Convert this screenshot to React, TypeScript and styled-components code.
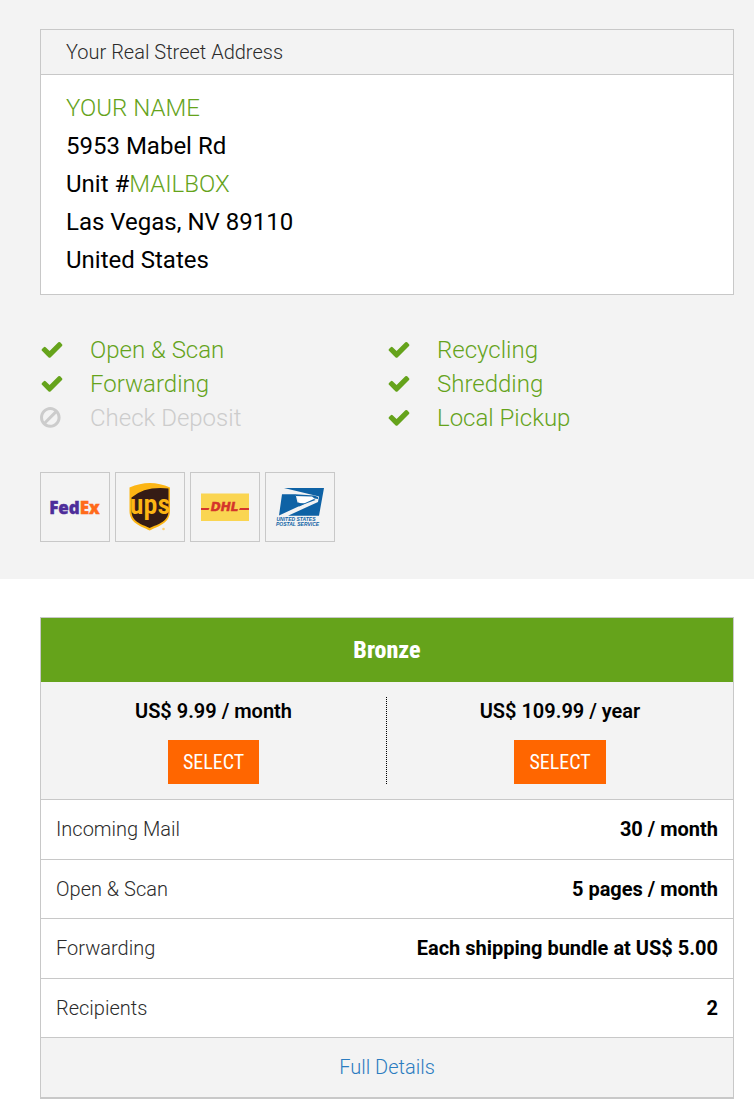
import React from 'react';
import styled, { createGlobalStyle } from 'styled-components';

const GlobalStyle = createGlobalStyle`
  *, *::before, *::after { box-sizing: border-box; }
  body { margin: 0; background: #fff; color: #000; font: 300 20px/28px Roboto, "Liberation Sans", sans-serif; }
`;

const green = '#65a31b';
const line = '#c8c8c8';
const grey = '#f3f3f3';
const muted = '#2b2b2b';

const Location = styled.section`
  padding: 29px 20px 37px 40px;
  background: ${grey};
`;

const AddressCard = styled.div`
  border: 1px solid ${line};
`;

const AddressTitle = styled.h2`
  margin: 0;
  padding: 8px 25px;
  border-bottom: 1px solid ${line};
  color: ${muted};
  font-size: 20px;
  font-weight: 300;
`;

const Address = styled.address`
  padding: 14px 25px 15px;
  background: #fff;
  font-size: 24px;
  font-style: normal;
  font-weight: 400;
  line-height: 38px;
`;

const Placeholder = styled.span`
  color: ${green};
  font-weight: 300;
`;

const Features = styled.ul`
  display: grid;
  grid-auto-flow: column;
  grid-template-rows: repeat(3, auto);
  grid-template-columns: 1fr 1fr;
  margin: 38px 0 37px;
  padding: 0;
  list-style: none;
  font-size: 24px;
  line-height: 34px;
`;

const Feature = styled.li<{ $off?: boolean }>`
  display: flex;
  align-items: center;
  gap: 26px;
  color: ${(p) => (p.$off ? '#cccccc' : green)};
`;

const FeatureIcon = styled.svg`
  width: 24px;
  height: 24px;
  fill: currentColor;
`;

const Carriers = styled.div`
  display: flex;
  gap: 5px;
`;

const Carrier = styled.div`
  width: 70px;
  height: 70px;
  border: 1px solid ${line};
  svg { display: block; width: 100%; height: 100%; }
`;

const Plans = styled.section`
  padding: 38px 20px 7px 40px;
`;

const Plan = styled.article`
  border: 1px solid ${line};
  border-bottom-width: 2px;
`;

const PlanName = styled.h2`
  margin: 0;
  padding: 18px 15px;
  background: ${green};
  color: #fff;
  font: 800 24px/28px "Roboto Condensed", Roboto, sans-serif;
  text-align: center;
`;

const Prices = styled.div`
  display: grid;
  grid-template-columns: 1fr 1fr;
  padding: 15px 0;
  background: ${grey};
  border-bottom: 1px solid ${line};
`;

const Price = styled.div`
  display: flex;
  flex-direction: column;
  align-items: center;
  gap: 15px;
  font-weight: 600;
  &:first-child { border-right: 1px dotted #000; }
`;

const SelectButton = styled.button`
  padding: 8px 15px;
  border: 0;
  background: #ff6600;
  color: #fff;
  font: 400 20px/28px "Roboto Condensed", Roboto, sans-serif;
  cursor: pointer;
`;

const Limits = styled.table`
  width: 100%;
  height: 238px;
  border-spacing: 0;
`;

const LimitName = styled.th`
  padding: 0 15px;
  border-bottom: 1px solid ${line};
  color: ${muted};
  font-weight: 300;
  text-align: left;
`;

const LimitValue = styled.td`
  padding: 0 15px;
  border-bottom: 1px solid ${line};
  font-weight: 700;
  text-align: right;
`;

const PlanFooter = styled.div`
  padding: 15px 16px 16px;
  background: ${grey};
  text-align: center;
`;

const DetailsLink = styled.a`
  color: #2b7cc0;
  text-decoration: none;
`;

const CheckIcon = () => (
  <FeatureIcon viewBox="0 40 1792 1792" aria-hidden="true">
    <path d="M1671 566q0 40-28 68l-724 724-136 136q-28 28-68 28t-68-28l-136-136-362-362q-28-28-28-68t28-68l136-136q28-28 68-28t68 28l294 295 656-657q28-28 68-28t68 28l136 136q28 28 28 68z" />
  </FeatureIcon>
);

const BanIcon = () => (
  <FeatureIcon viewBox="128 40 1792 1792" aria-hidden="true">
    <path d="M1440 893q0-161-87-295l-754 753q137 89 297 89 111 0 211.5-43.5t173.5-116.5 116-174.5 43-212.5zm-999 299l755-754q-135-91-300-91-148 0-273 73t-198 199-73 274q0 162 89 299zm1223-299q0 157-61 300t-163.5 246-245 164-298.5 61-298.5-61-245-164-163.5-246-61-300 61-299.5 163.5-245.5 245-164 298.5-61 298.5 61 245 164 163.5 245.5 61 299.5z" />
  </FeatureIcon>
);

const FedexLogo = () => (
  <svg viewBox="0 0 68 68" role="img" aria-label="FedEx">
    <text x="33.500" y="41" textAnchor="middle" fontFamily="Open Sans, sans-serif" fontWeight="800" fontSize="17" fill="#4d2d9a" stroke="#4d2d9a" strokeWidth="0.4">
      Fed<tspan fill="#ff6a1a" stroke="#ff6a1a">Ex</tspan>
    </text>
  </svg>
);

const UpsLogo = () => (
  <svg viewBox="0 0 68 68" role="img" aria-label="UPS">
    <path d="M13.5 14.5Q34 5.500 54 14.500V38C54 50 43 53 33.700 57.500C24.500 53 13.500 50 13.500 38Z" fill="#fcb514" />
    <path d="M15.500 24.500Q29 13 52.500 15.500V38C52.500 48.500 42.500 51 33.700 55C25 51 15.500 48.500 15.500 38Z" fill="#351c15" />
    <text x="34" y="41" textAnchor="middle" fontFamily="Roboto Condensed, Roboto, sans-serif" fontWeight="600" fontSize="28" fill="#fcb514">ups</text>
    <circle cx="47.500" cy="56" r="1.300" fill="#fbd27a" />
  </svg>
);

const DhlLogo = () => (
  <svg viewBox="0 0 68 68" role="img" aria-label="DHL">
    <path d="M10 20.500H58V48H10Z" fill="#fad551" />
    <path d="M10 35H18.500L17.500 37H10ZM49 35H58V37H48Z" fill="#d5352b" />
    <text x="33.500" y="37.500" textAnchor="middle" fontFamily="DejaVu Sans, sans-serif" fontWeight="700" fontStyle="italic" fontSize="12" fill="#d5352b" stroke="#d5352b" strokeWidth="0.5">DHL</text>
  </svg>
);

const UspsLogo = () => (
  <svg viewBox="0 0 68 68" role="img" aria-label="United States Postal Service">
    <path d="M18 15H58L53 42.700H22L52 29L53 23.500L47 22Z" fill="#0e62a5" />
    <path d="M16 21.300H29.500L31.500 29.500L40 30L13 42.500Z" fill="#0e62a5" />
    <path d="M31 23.500H47L49 26L38 30.500L33.500 30Z" fill="#fff" />
    <path d="M29 21.300L48 22.500L52 24V26L48.500 25.500L46 23.500L30 23Z" fill="#0e62a5" />
    <path d="M49.500 27L40 30.500L33 33.500L32 31L38 30.500L48 26Z" fill="#0e62a5" />
    <g fontFamily="Liberation Sans, sans-serif" fontWeight="700" fontStyle="italic" fontSize="5" fill="#0e62a5">
      <text x="10.500" y="48">UNITED STATES</text>
      <text x="10" y="53">POSTAL SERVICE</text>
    </g>
  </svg>
);

const features = [
  { name: 'Open & Scan' },
  { name: 'Forwarding' },
  { name: 'Check Deposit', off: true },
  { name: 'Recycling' },
  { name: 'Shredding' },
  { name: 'Local Pickup' },
];

const limits = [
  ['Incoming Mail', '30 / month'],
  ['Open & Scan', '5 pages / month'],
  ['Forwarding', 'Each shipping bundle at US$ 5.00'],
  ['Recipients', '2'],
];

export default function App() {
  return (
    <main>
      <GlobalStyle />
      <Location>
        <AddressCard>
          <AddressTitle>Your Real Street Address</AddressTitle>
          <Address>
            <Placeholder>YOUR NAME</Placeholder><br />
            5953 Mabel Rd<br />
            Unit #<Placeholder>MAILBOX</Placeholder><br />
            Las Vegas, NV 89110<br />
            United States
          </Address>
        </AddressCard>
        <Features>
          {features.map((f) => (
            <Feature key={f.name} $off={f.off}>
              {f.off ? <BanIcon /> : <CheckIcon />}
              {f.name}
            </Feature>
          ))}
        </Features>
        <Carriers>
          <Carrier><FedexLogo /></Carrier>
          <Carrier><UpsLogo /></Carrier>
          <Carrier><DhlLogo /></Carrier>
          <Carrier><UspsLogo /></Carrier>
        </Carriers>
      </Location>
      <Plans>
        <Plan>
          <PlanName>Bronze</PlanName>
          <Prices>
            <Price>US$ 9.99 / month<SelectButton type="button">SELECT</SelectButton></Price>
            <Price>US$ 109.99 / year<SelectButton type="button">SELECT</SelectButton></Price>
          </Prices>
          <Limits>
            <tbody>
              {limits.map(([name, value]) => (
                <tr key={name}>
                  <LimitName scope="row">{name}</LimitName>
                  <LimitValue>{value}</LimitValue>
                </tr>
              ))}
            </tbody>
          </Limits>
          <PlanFooter><DetailsLink href="#details">Full Details</DetailsLink></PlanFooter>
        </Plan>
      </Plans>
    </main>
  );
}
